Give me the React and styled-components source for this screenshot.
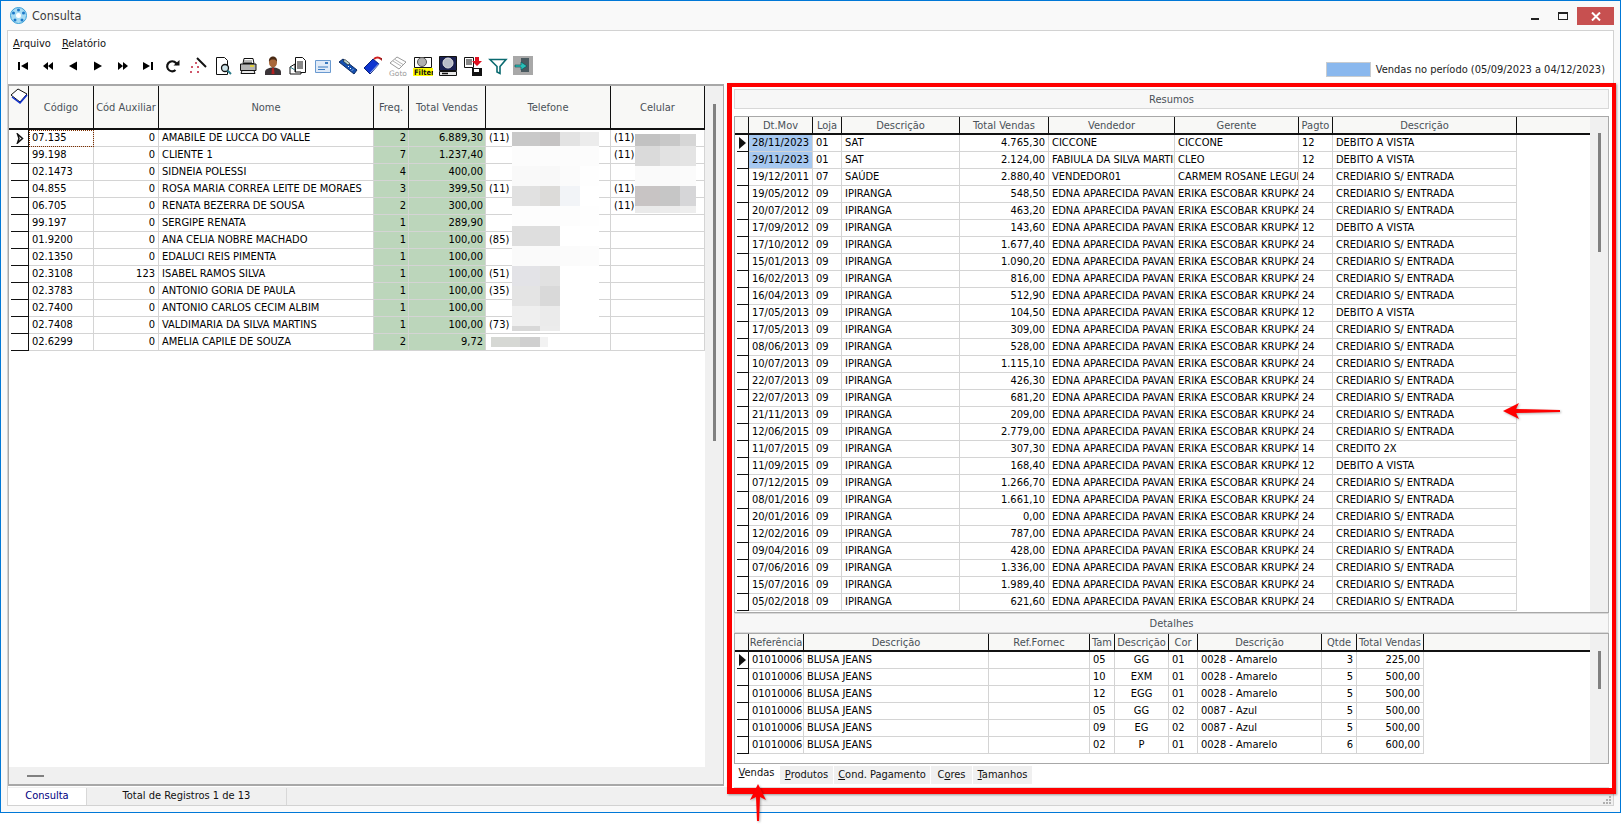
import React from 'react';
import styled, { createGlobalStyle } from 'styled-components';

const GlobalStyle = createGlobalStyle`
  html, body {
    margin: 0;
    padding: 0;
    background: #fff;
    overflow: hidden;
    font-family: "DejaVu Sans Condensed", "DejaVu Sans", sans-serif;
    font-size: 11px;
    color: #000;
  }
  * { box-sizing: border-box; }
`;

const Page = styled.div`
  position: relative;
  width: 1621px;
  height: 826px;
`;
const Window = styled.div`
  width: 1621px;
  height: 813px;
  border: 1px solid #0078d7;
  background: #f9f9f9;
  padding: 0 6px 6px;
  display: flex;
  flex-direction: column;
`;
const TitleBar = styled.div`
  height: 29px;
  display: flex;
  align-items: center;
  padding-left: 3px;
`;
const TitleText = styled.span`
  margin-left: 5px;
  font-size: 12.5px;
  color: #3c3c3c;
`;
const WinButtons = styled.div`
  margin-left: auto;
  display: flex;
  align-items: flex-start;
  height: 100%;
  margin-right: 0;
`;
const WinBtn = styled.div`
  width: ${p => p.$w}px;
  height: 18px;
  margin-top: 6px;
  display: flex;
  align-items: center;
  justify-content: center;
  background: ${p => p.$bg || 'transparent'};
`;
const Frame = styled.div`
  flex: 1;
  min-height: 0;
  border: 1px solid #d2d2d2;
  background: #fff;
  display: flex;
  flex-direction: column;
`;
const MenuBar = styled.div`
  height: 22px;
  padding: 4px 0 0 5px;
  display: flex;
  gap: 11px;
  line-height: 18px;
`;
const MenuItem = styled.span`
  color: #111;
  u { text-decoration: underline; }
`;
const Toolbar = styled.div`
  height: 31px;
  padding: 0 8px 5px 2px;
  display: flex;
  align-items: center;
`;
const ToolBtn = styled.div`
  width: 25px;
  height: 22px;
  display: flex;
  align-items: center;
  justify-content: center;
  flex: none;
`;
const Legend = styled.div`
  margin-left: auto;
  margin-top: 6px;
  display: flex;
  align-items: center;
  gap: 5px;
  color: #222;
`;
const Swatch = styled.div`
  width: 45px;
  height: 15px;
  background: #8ab8ee;
  border: 1px solid #c8ccd0;
`;
const Split = styled.div`
  height: 702px;
  display: flex;
  align-items: flex-start;
`;
const LeftPanel = styled.div`
  width: 716px;
  height: 702px;
  flex: none;
  border: 1px solid #a8a8a8;
  border-top-width: 2px;
  border-bottom-width: 2px;
  display: flex;
  flex-direction: column;
`;
const LeftBody = styled.div`
  flex: 1;
  min-height: 0;
  display: flex;
`;
const LeftGridArea = styled.div`
  position: relative;
  width: 696px;
  flex: none;
`;
const VTrack = styled.div`
  flex: 1;
  background: #f0f0f0;
  display: flex;
  justify-content: center;
`;
const VThumb = styled.div`
  width: 3px;
  height: ${p => p.$h}px;
  margin-top: ${p => p.$top}px;
  background: #808080;
`;
const HTrack = styled.div`
  height: 17px;
  background: #f0f0f0;
  display: flex;
  align-items: center;
  padding-left: 18px;
`;
const HThumb = styled.div`
  width: 17px;
  height: 2px;
  background: #808080;
`;
const RightPanel = styled.div`
  position: relative;
  z-index: 1;
  width: 889px;
  height: 711px;
  flex: none;
  margin: -1px 0 0 3px;
  border: 4px solid #f00;
  border-left-width: 5px;
  border-bottom-width: 6px;
  box-shadow: 1px 1px 2px rgba(0, 0, 0, .35);
  background: #fff;
  padding: 2px 3px 0 2px;
  display: flex;
  flex-direction: column;
`;
const SectionBar = styled.div`
  height: ${p => p.$h}px;
  margin-bottom: ${p => p.$mb || 0}px;
  background: #f7f7f7;
  border: 1px solid #d8d8d8;
  color: #4a5158;
  display: flex;
  align-items: center;
  justify-content: center;
  flex: none;
`;
const GridBox = styled.div`
  height: ${p => p.$h}px;
  flex: none;
  border: 1px solid #a8a8a8;
  display: flex;
`;
const GridMain = styled.div`
  width: ${p => p.$w}px;
  flex: none;
  overflow: hidden;
`;
const HeadRow = styled.div`
  height: ${p => p.$h + 2}px;
  display: flex;
  background: #f8f8f6;
  border-bottom: 2px solid #111;
`;
const HeadCell = styled.div`
  width: ${p => p.$w}px;
  flex: none;
  display: flex;
  align-items: center;
  justify-content: center;
  color: #4a5158;
  white-space: nowrap;
  overflow: hidden;
  border-right: ${p => (p.$open ? '0' : '1px solid #111')};
`;
const HeadCorner = styled(HeadCell)`
  align-items: flex-start;
  padding-top: 2px;
`;
const Row = styled.div`
  height: 17px;
  display: flex;
`;
const Indicator = styled.div`
  width: ${p => p.$w}px;
  flex: none;
  display: flex;
  align-items: center;
  justify-content: center;
  margin-left: ${p => p.$inset}px;
  border-right: 1px solid #111;
  border-bottom: 1px solid #111;
`;
const Cell = styled.div`
  width: ${p => p.$w}px;
  flex: none;
  height: 17px;
  line-height: 16px;
  padding: 0 ${p => (p.$green ? 2 : 3)}px 0 3px;
  text-align: ${p => p.$a || 'left'};
  white-space: nowrap;
  overflow: hidden;
  border-right: 1px solid #d4d4d4;
  border-bottom: 1px solid #d4d4d4;
  background: ${p => (p.$green ? '#bcd6bb' : p.$sel ? '#a6c8f0' : 'transparent')};
  outline: ${p => (p.$focus ? '1px dotted #803000' : 'none')};
  outline-offset: -1px;
`;
const MaskGrid = styled.div`
  position: absolute;
  left: ${p => p.$x}px;
  top: ${p => p.$y}px;
  display: grid;
  grid-template-columns: ${p => p.$cols};
  grid-template-rows: ${p => p.$rows};
`;
const MaskCell = styled.div`
  background: ${p => p.$c};
`;
const TabStrip = styled.div`
  flex: 1;
  display: flex;
  align-items: flex-start;
  border-bottom: 1px solid #dcdcdc;
  padding-top: 2px;
`;
const Tab = styled.div`
  width: ${p => p.$w}px;
  height: ${p => (p.$active ? 21 : 18)}px;
  margin-top: ${p => (p.$active ? -1 : 0)}px;
  display: flex;
  justify-content: center;
  line-height: ${p => (p.$active ? 15 : 18)}px;
  background: ${p => (p.$active ? '#fff' : '#f0f0f0')};
  border-right: 1px solid #fff;
  color: #111;
`;
const StatusBar = styled.div`
  flex: 1;
  min-height: 0;
  margin-top: 1px;
  background: #f0f0f0;
  display: flex;
  align-items: stretch;
  padding-top: 1px;
`;
const StatusTab = styled.div`
  width: 79px;
  background: #fff;
  color: #000080;
  text-align: center;
  line-height: 15px;
  border-right: 1px solid #d8d8d8;
`;
const StatusCell = styled.div`
  width: 200px;
  color: #111;
  text-align: center;
  line-height: 15px;
  border-right: 1px solid #d8d8d8;
`;
const Grip = styled.div`
  margin: auto 1px 0 auto;
  display: flex;
`;
const ArrowLayer = styled.svg`
  position: absolute;
  left: ${p => p.$x}px;
  top: ${p => p.$y}px;
  z-index: 2;
  filter: drop-shadow(1px 1px 1px rgba(0, 0, 0, .3));
`;

/* toolbar icons, drawn by hand */
const Svg = ({ children, w = 20, h = 20 }) => (
  <svg width={w} height={h} viewBox={`0 0 ${w} ${h}`}>{children}</svg>
);
const NavFirst = () => <Svg><rect x="5" y="6" width="2" height="8" /><path d="M15 6v8l-7-4z" /></Svg>;
const NavPrevPage = () => <Svg><path d="M10 6v8l-5-4zM15 6v8l-5-4z" /></Svg>;
const NavPrev = () => <Svg><path d="M14 5.500v9l-8-4.500z" /></Svg>;
const NavNext = () => <Svg><path d="M6 5.500v9l8-4.500z" /></Svg>;
const NavNextPage = () => <Svg><path d="M5 6v8l5-4zM10 6v8l5-4z" /></Svg>;
const NavLast = () => <Svg><path d="M5 6v8l7-4z" /><rect x="13" y="6" width="2" height="8" /></Svg>;
const Refresh = () => (
  <Svg>
    <path d="M14 9a5 5 0 1 0-1.500 5" fill="none" stroke="#111" strokeWidth="2.200" />
    <path d="M10.500 9.500h6v-5.500z" fill="#111" />
  </Svg>
);
const Wand = () => (
  <Svg>
    <path d="M9 2l9 9" stroke="#111" strokeWidth="2" />
    <path d="M7 7h2M8 6v2M3 11h2M4 10v2M9 11h2M10 10v2M2 16h2M3 15v2M9 16h2M10 15v2" stroke="#c0203a" />
  </Svg>
);
const Preview = () => (
  <Svg>
    <path d="M3.500 1.500h8l3 3v14h-11z" fill="#fff" stroke="#111" />
    <circle cx="12" cy="12" r="3.500" fill="#cfe4ea" stroke="#111" strokeWidth="1.300" />
    <path d="M14.500 14.500l3.500 3.500" stroke="#2a7a88" strokeWidth="2" />
  </Svg>
);
const Printer = () => (
  <Svg>
    <path d="M6 2.500h9l1 5h-11z" fill="#fff" stroke="#111" />
    <path d="M2.500 8h15.500v6.500h-15.500z" fill="#b4b4b4" stroke="#111" />
    <path d="M4 14.500h12l1 3h-14z" fill="#e8e8e8" stroke="#111" />
    <path d="M12 10h4" stroke="#e0d040" strokeWidth="2" />
    <path d="M6 5h8M6 6.500h8" stroke="#777" />
  </Svg>
);
const Person = () => (
  <Svg>
    <path d="M2 19v-3c0-3 4-4 8-5 4 1 8 2 8 5v3z" fill="#3b3438" />
    <path d="M9 12h2l.5 6h-3z" fill="#b02020" />
    <ellipse cx="10" cy="6.500" rx="4" ry="5" fill="#a8683c" />
    <path d="M6 6c-.5-4 2-5.500 4-5.500s4.500 1.500 4 5.500c-1-2-2-2.500-4-2.500s-3 .5-4 2.500z" fill="#4a2a14" />
  </Svg>
);
const Docs = () => (
  <Svg>
    <path d="M7.500 1.500h7l3 3v12h-10z" fill="#fff" stroke="#111" />
    <path d="M9 6h6M9 8h6M9 10h6M9 12h6" stroke="#111" />
    <path d="M7 8l-5 3v7h11v-2h-6z" fill="#fff" stroke="#111" />
    <path d="M2 11l5 3" stroke="#2a7a88" />
  </Svg>
);
const Mail = () => (
  <Svg>
    <path d="M2.500 4.500h15v12h-15z" fill="#dfeaf8" stroke="#6a9ad0" />
    <path d="M5 11h10M5 13.500h7" stroke="#3a7ac0" />
    <path d="M12 7h3" stroke="#3a7ac0" strokeWidth="2" />
  </Svg>
);
const Phone = () => (
  <Svg>
    <path d="M1 6l4-3 14 11-3 4z" fill="#1450b0" stroke="#0c2a60" />
    <path d="M5 5l2-1.500 5 4-2 1.500z" fill="#bcd8d0" stroke="#111" strokeWidth=".6" />
    <path d="M10 11l1-1M12 13l1-1M14 14.500l1-1" stroke="#fff" />
  </Svg>
);
const Tag = () => (
  <Svg>
    <path d="M1 12l9-9 6 5-9 10z" fill="#0f35d0" stroke="#08207a" />
    <path d="M7 17l9-9.500" stroke="#9ab4f0" />
    <path d="M11 3c2-2 5-2 7 0" fill="none" stroke="#d02020" strokeWidth="2" />
    <path d="M16 2h3v3z" fill="#a02020" />
  </Svg>
);
const Goto = () => (
  <Svg h={22}>
    <path d="M2 8l7-6 9 5-7 7z" fill="#fff" stroke="#9a9a9a" />
    <path d="M5 6l8 5M7 4.500l8 5" stroke="#b4b4b4" />
    <text x="1" y="21" fontSize="7.500" fontFamily="DejaVu Sans" fill="#9a9a9a">Goto</text>
  </Svg>
);
const FilterIcon = () => (
  <Svg h={22}>
    <path d="M1.500 2.500h17v10h-17z" fill="#fff" stroke="#111" />
    <circle cx="9" cy="7" r="4.500" fill="#b0b0b0" stroke="#555" />
    <rect y="13" width="20" height="8" fill="#ff0" />
    <text x="1" y="20" fontSize="7.500" fontWeight="700" fontFamily="DejaVu Sans Condensed" fill="#111">Filter</text>
  </Svg>
);
const Monitor = () => (
  <Svg h={22}>
    <path d="M1.500 1.500h17v14h-17z" fill="#1a2050" stroke="#111" />
    <circle cx="10" cy="8" r="5" fill="#b8bcc8" stroke="#e0e0e0" />
    <path d="M1.500 16.500h17v4h-17z" fill="#e8e8e8" stroke="#111" />
    <path d="M4 18.500h6" stroke="#111" strokeWidth="1.500" />
  </Svg>
);
const SaveArrow = () => (
  <Svg h={22}>
    <path d="M1.500 2.500h9v10h-9z" fill="#fff" stroke="#111" />
    <path d="M3 5h6M3 7h6M3 9h6" stroke="#111" />
    <path d="M12 2v4h-3l5 5 5-5h-3v-4z" fill="#e01020" />
    <path d="M9 13h10v8h-10z" fill="#111" />
    <path d="M11 14h5v3h-5z" fill="#fff" />
  </Svg>
);
const Funnel = () => (
  <Svg>
    <path d="M2 3.500h16l-6 7v7l-3-1.500v-5.500z" fill="#fff" stroke="#0a6a70" strokeWidth="1.600" />
  </Svg>
);
const ExitIcon = () => (
  <Svg h={22}>
    <rect y="1" width="20" height="19" fill="#a8a8a8" />
    <path d="M8 3h8v14h-8z" fill="#4a5a60" />
    <path d="M2 10h6v-3l6 4-6 4v-3h-6z" fill="#28c0b8" stroke="#0a4a50" strokeWidth=".6" />
  </Svg>
);
const toolIcons = [NavFirst, NavPrevPage, NavPrev, NavNext, NavNextPage, NavLast, Refresh, Wand, Preview, Printer, Person, Docs, Mail, Phone, Tag, Goto, FilterIcon, Monitor, SaveArrow, Funnel, ExitIcon];

const AppLogo = () => (
  <svg width="17" height="17" viewBox="0 0 17 17">
    <circle cx="8.500" cy="8.500" r="8" fill="#a8dcf4" stroke="#3aa0d8" />
    <circle cx="8.500" cy="8.500" r="2.500" fill="#fff" />
    <circle cx="8.500" cy="3" r="1.500" fill="#1c78c8" />
    <circle cx="3.500" cy="6" r="1.500" fill="#1c78c8" />
    <circle cx="13.500" cy="6" r="1.500" fill="#1c78c8" />
    <circle cx="5" cy="13" r="1.500" fill="#1c78c8" />
    <circle cx="12" cy="13" r="1.500" fill="#1c78c8" />
  </svg>
);
const BookIcon = () => (
  <svg width="18" height="16" viewBox="0 0 18 16">
    <path d="M1 7l7-6 9 5-7 8z" fill="#fff" stroke="#111" />
    <path d="M2 9l8 6 7-8" fill="none" stroke="#1030d0" strokeWidth="1.500" />
  </svg>
);
const RowMark = ({ hollow }) => (
  hollow
    ? <svg width="8" height="11" viewBox="0 0 8 11"><path d="M1.500 1l5 4.500-5 4.500 1.500-4.500z" fill="#fff" stroke="#111" strokeWidth="1.500" /></svg>
    : <svg width="7" height="12" viewBox="0 0 7 12"><path d="M0 0l7 6-7 6z" fill="#111" /></svg>
);

/* columns and data */
const leftCols = [
  { t: 'Código', w: 65 },
  { t: 'Cód Auxiliar', w: 65, a: 'right' },
  { t: 'Nome', w: 215 },
  { t: 'Freq.', w: 35, a: 'right', green: true },
  { t: 'Total Vendas', w: 77, a: 'right', green: true },
  { t: 'Telefone', w: 125 },
  { t: 'Celular', w: 94 },
];
const leftRows = [
  ['07.135', '0', 'AMABILE DE LUCCA DO VALLE', '2', '6.889,30', '(11)', '(11)'],
  ['99.198', '0', 'CLIENTE 1', '7', '1.237,40', '', '(11)'],
  ['02.1473', '0', 'SIDNEIA POLESSI', '4', '400,00', '', ''],
  ['04.855', '0', 'ROSA MARIA CORREA LEITE DE MORAES', '3', '399,50', '(11)', '(11)'],
  ['06.705', '0', 'RENATA  BEZERRA DE SOUSA', '2', '300,00', '', '(11)'],
  ['99.197', '0', 'SERGIPE RENATA', '1', '289,90', '', ''],
  ['01.9200', '0', 'ANA CELIA NOBRE MACHADO', '1', '100,00', '(85)', ''],
  ['02.1350', '0', 'EDALUCI REIS PIMENTA', '1', '100,00', '', ''],
  ['02.3108', '123', 'ISABEL RAMOS SILVA', '1', '100,00', '(51)', ''],
  ['02.3783', '0', 'ANTONIO GORIA DE PAULA', '1', '100,00', '(35)', ''],
  ['02.7400', '0', 'ANTONIO CARLOS CECIM ALBIM', '1', '100,00', '', ''],
  ['02.7408', '0', 'VALDIMARIA DA SILVA MARTINS', '1', '100,00', '(73)', ''],
  ['02.6299', '0', 'AMELIA CAPILE DE SOUZA', '2', '9,72', '', ''],
];
const resumoCols = [
  { t: 'Dt.Mov', w: 64 },
  { t: 'Loja', w: 29 },
  { t: 'Descrição', w: 118 },
  { t: 'Total Vendas', w: 89, a: 'right' },
  { t: 'Vendedor', w: 126 },
  { t: 'Gerente', w: 124 },
  { t: 'Pagto', w: 34 },
  { t: 'Descrição', w: 184 },
];
const EDNA = 'EDNA APARECIDA PAVANELLI';
const ERIKA = 'ERIKA ESCOBAR KRUPKA';
const CRED = 'CREDIARIO S/ ENTRADA';
const DEB = 'DEBITO A VISTA';
const ipiranga = (d, v, p = '24', desc = CRED) => [d, '09', 'IPIRANGA', v, EDNA, ERIKA, p, desc];
const resumoRows = [
  ['28/11/2023', '01', 'SAT', '4.765,30', 'CICCONE', 'CICCONE', '12', DEB],
  ['29/11/2023', '01', 'SAT', '2.124,00', 'FABIULA DA SILVA MARTINS', 'CLEO', '12', DEB],
  ['19/12/2011', '07', 'SAÚDE', '2.880,40', 'VENDEDOR01', 'CARMEM ROSANE LEGUIC', '24', CRED],
  ipiranga('19/05/2012', '548,50'),
  ipiranga('20/07/2012', '463,20'),
  ipiranga('17/09/2012', '143,60', '12', DEB),
  ipiranga('17/10/2012', '1.677,40'),
  ipiranga('15/01/2013', '1.090,20'),
  ipiranga('16/02/2013', '816,00'),
  ipiranga('16/04/2013', '512,90'),
  ipiranga('17/05/2013', '104,50', '12', DEB),
  ipiranga('17/05/2013', '309,00'),
  ipiranga('08/06/2013', '528,00'),
  ipiranga('10/07/2013', '1.115,10'),
  ipiranga('22/07/2013', '426,30'),
  ipiranga('22/07/2013', '681,20'),
  ipiranga('21/11/2013', '209,00'),
  ipiranga('12/06/2015', '2.779,00'),
  ipiranga('11/07/2015', '307,30', '14', 'CREDITO 2X'),
  ipiranga('11/09/2015', '168,40', '12', DEB),
  ipiranga('07/12/2015', '1.266,70'),
  ipiranga('08/01/2016', '1.661,10'),
  ipiranga('20/01/2016', '0,00'),
  ipiranga('12/02/2016', '787,00'),
  ipiranga('09/04/2016', '428,00'),
  ipiranga('07/06/2016', '1.336,00'),
  ipiranga('15/07/2016', '1.989,40'),
  ipiranga('05/02/2018', '621,60'),
];
const detalheCols = [
  { t: 'Referência', w: 55 },
  { t: 'Descrição', w: 185 },
  { t: 'Ref.Fornec', w: 101 },
  { t: 'Tam', w: 25 },
  { t: 'Descrição', w: 54, a: 'center' },
  { t: 'Cor', w: 29 },
  { t: 'Descrição', w: 124 },
  { t: 'Qtde', w: 35, a: 'right' },
  { t: 'Total Vendas', w: 67, a: 'right' },
];
const blusa = (tam, d, cor, desc, q, v) => ['01010006', 'BLUSA JEANS', '', tam, d, cor, desc, q, v];
const detalheRows = [
  blusa('05', 'GG', '01', '0028 - Amarelo', '3', '225,00'),
  blusa('10', 'EXM', '01', '0028 - Amarelo', '5', '500,00'),
  blusa('12', 'EGG', '01', '0028 - Amarelo', '5', '500,00'),
  blusa('05', 'GG', '02', '0087 - Azul', '5', '500,00'),
  blusa('09', 'EG', '02', '0087 - Azul', '5', '500,00'),
  blusa('02', 'P', '01', '0028 - Amarelo', '6', '600,00'),
];

/* the pixelated patches hiding the phone numbers; y values relative to the grid top */
const phoneMask = {
  x: 503, y: 46,
  cols: '28px 20px 20px 19px',
  rows: '14px 20px 20px 20px 20px 20px 20px 20px 20px 20px 5px',
  colors: [
    '#c9c9c9', '#c5c3c3', '#e3e3e3', '#ececec',
    '#fcfcfc', '#fcfcfc', '#fcfcfc', '#fcfcfc',
    '#f9f9f9', '#f8f8f8', '#fbfbfb', '#fefefe',
    '#e1e1e1', '#dcdbd9', '#f2f4f7', '#ffffff',
    '#fdfdfd', '#fdfdfd', '#fdfdfd', '#fefefe',
    '#dedede', '#dedede', '#ffffff', '#ffffff',
    '#fafafa', '#fafafa', '#fbfbfb', '#fcfcfc',
    '#e3e3e7', '#e1e1e1', '#ffffff', '#ffffff',
    '#e4e4e4', '#d9d9d9', '#ffffff', '#ffffff',
    '#efefef', '#ebebeb', '#ffffff', '#ffffff',
    '#d8d8d8', '#ececec', '#ffffff', '#ffffff',
  ],
};
const cellMask = {
  x: 626, y: 48,
  cols: '25px 20px 16px',
  rows: '12px 20px 20px 20px 7px',
  colors: [
    '#c2c2c2', '#c8c8c8', '#d6d6d6',
    '#dadada', '#e2e2e2', '#e4e4e4',
    '#fafafa', '#fafafa', '#fbfbfb',
    '#c8c4c4', '#c6c6c6', '#d6d6d8',
    '#eaeaea', '#ececec', '#eeeeee',
  ],
};
const lastMask = {
  x: 482, y: 251,
  cols: '29px 20px 8px',
  rows: '10px',
  colors: ['#d6d8d4', '#cfcfcf', '#f2f2f2'],
};

const Mask = ({ m }) => (
  <MaskGrid $x={m.x} $y={m.y} $cols={m.cols} $rows={m.rows}>
    {m.colors.map((c, i) => <MaskCell key={i} $c={c} />)}
  </MaskGrid>
);

const DataGrid = ({ cols, rows, indW, inset, headH, tailW, hollow, corner, focusFirst, selRows = 0 }) => (
  <>
    <HeadRow $h={headH}>
      {corner
        ? <HeadCorner $w={indW + inset}>{corner}</HeadCorner>
        : <HeadCell $w={indW + inset} />}
      {cols.map((c, i) => <HeadCell key={i} $w={c.w}>{c.t}</HeadCell>)}
      {tailW ? <HeadCell $w={tailW} $open /> : null}
    </HeadRow>
    {rows.map((r, ri) => (
      <Row key={ri}>
        <Indicator $w={indW} $inset={inset}>
          {ri === 0 ? <RowMark hollow={hollow} /> : null}
        </Indicator>
        {cols.map((c, ci) => (
          <Cell
            key={ci}
            $w={c.w}
            $a={c.a}
            $green={c.green}
            $sel={ci === 0 && ri < selRows}
            $focus={focusFirst && ri === 0 && ci === 0}
          >
            {r[ci]}
          </Cell>
        ))}
      </Row>
    ))}
  </>
);

const tabs = [
  { w: 46, pre: '', u: 'V', post: 'endas', active: true },
  { w: 54, pre: '', u: 'P', post: 'rodutos' },
  { w: 97, pre: '', u: 'C', post: 'ond. Pagamento' },
  { w: 42, pre: 'C', u: 'o', post: 'res' },
  { w: 60, pre: '', u: 'T', post: 'amanhos' },
];

export default function App() {
  return (
    <Page>
      <GlobalStyle />
      <Window>
        <TitleBar>
          <AppLogo />
          <TitleText>Consulta</TitleText>
          <WinButtons>
            <WinBtn $w={28}>
              <svg width="8" height="10" viewBox="0 0 8 10"><rect y="7" width="8" height="2" fill="#222" /></svg>
            </WinBtn>
            <WinBtn $w={28}>
              <svg width="10" height="8" viewBox="0 0 10 8"><rect x=".5" y=".5" width="9" height="7" fill="none" stroke="#222" /><rect width="10" height="2" fill="#222" /></svg>
            </WinBtn>
            <WinBtn $w={37} $bg="#c75050">
              <svg width="10" height="9" viewBox="0 0 10 9"><path d="M1 .5l8 8M9 .5l-8 8" stroke="#fff" strokeWidth="2" /></svg>
            </WinBtn>
          </WinButtons>
        </TitleBar>
        <Frame>
          <MenuBar>
            <MenuItem><u>A</u>rquivo</MenuItem>
            <MenuItem><u>R</u>elatório</MenuItem>
          </MenuBar>
          <Toolbar>
            {toolIcons.map((Icon, i) => <ToolBtn key={i}><Icon /></ToolBtn>)}
            <Legend>
              <Swatch />
              <span>Vendas no período (05/09/2023 a 04/12/2023)</span>
            </Legend>
          </Toolbar>
          <Split>
            <LeftPanel>
              <LeftBody>
                <LeftGridArea>
                  <DataGrid
                    cols={leftCols}
                    rows={leftRows}
                    indW={18}
                    inset={2}
                    headH={42}
                    hollow
                    focusFirst
                    corner={<BookIcon />}
                  />
                  <Mask m={phoneMask} />
                  <Mask m={cellMask} />
                  <Mask m={lastMask} />
                </LeftGridArea>
                <VTrack><VThumb $top={18} $h={337} /></VTrack>
              </LeftBody>
              <HTrack><HThumb /></HTrack>
            </LeftPanel>
            <RightPanel>
              <SectionBar $h={20} $mb={7}>Resumos</SectionBar>
              <GridBox $h={497}>
                <GridMain $w={855}>
                  <DataGrid cols={resumoCols} rows={resumoRows} indW={12} inset={2} headH={16} tailW={73} selRows={2} />
                </GridMain>
                <VTrack><VThumb $top={16} $h={119} /></VTrack>
              </GridBox>
              <SectionBar $h={20}>Detalhes</SectionBar>
              <GridBox $h={131}>
                <GridMain $w={855}>
                  <DataGrid cols={detalheCols} rows={detalheRows} indW={12} inset={2} headH={16} tailW={166} />
                </GridMain>
                <VTrack><VThumb $top={17} $h={38} /></VTrack>
              </GridBox>
              <TabStrip>
                {tabs.map(t => (
                  <Tab key={t.u} $w={t.w} $active={t.active}>
                    <span>{t.pre}<u>{t.u}</u>{t.post}</span>
                  </Tab>
                ))}
              </TabStrip>
            </RightPanel>
          </Split>
          <StatusBar>
            <StatusTab>Consulta</StatusTab>
            <StatusCell>Total de Registros 1 de 13</StatusCell>
            <Grip>
              <svg width="9" height="9" viewBox="0 0 9 9" fill="#b0b0b0">
                <rect x="6" y="0" width="2" height="2" />
                <rect x="3" y="3" width="2" height="2" />
                <rect x="6" y="3" width="2" height="2" />
                <rect x="0" y="6" width="2" height="2" />
                <rect x="3" y="6" width="2" height="2" />
                <rect x="6" y="6" width="2" height="2" />
              </svg>
            </Grip>
          </StatusBar>
        </Frame>
      </Window>
      <ArrowLayer $x={1502} $y={402} width="60" height="18" viewBox="0 0 60 18">
        <path d="M1 9L17 1l-3 6 44 1v2l-44 1 3 6z" fill="#f00" />
      </ArrowLayer>
      <ArrowLayer $x={749} $y={783} width="18" height="40" viewBox="0 0 18 40">
        <path d="M9 1l8 16-6-3-1 24h-2l-1-24-6 3z" fill="#f00" />
      </ArrowLayer>
    </Page>
  );
}
